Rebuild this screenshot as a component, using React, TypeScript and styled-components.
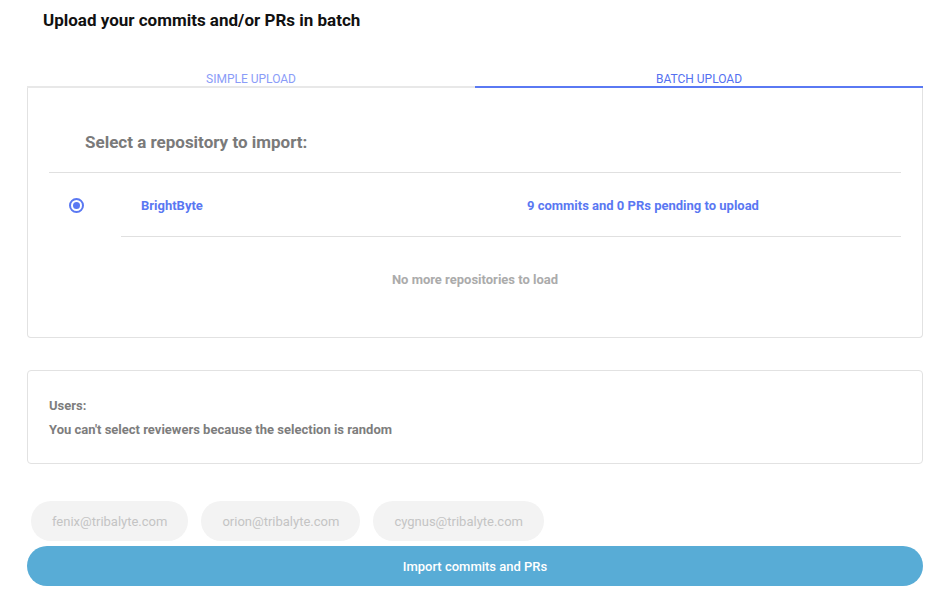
import React from "react";
import styled, { createGlobalStyle } from "styled-components";

const Global = createGlobalStyle`
  html, body { margin: 0; padding: 0; background: #fff; }
  body { font-family: Roboto, "Liberation Sans", Arial, sans-serif; }
  * { box-sizing: border-box; }
`;

const Page = styled.div`
  padding: 0 28px 0 27px;
  display: flex;
  flex-direction: column;
`;

const Title = styled.h1`
  margin: 0 0 0 16px;
  padding-top: 10px;
  font-size: 17px;
  line-height: 20px;
  font-weight: 700;
  color: #111;
`;

const Tabs = styled.div`
  margin-top: 32px;
  display: grid;
  grid-template-columns: 1fr 1fr;
`;

const Tab = styled.div<{ $active?: boolean }>`
  padding-top: 10px;
  line-height: 14px;
  font-size: 12px;
  font-weight: 400;
  text-align: center;
  text-transform: uppercase;
  color: ${(p) => (p.$active ? "#5470f0" : "#8a9cf8")};
  border-bottom: 2px solid ${(p) => (p.$active ? "#5a79f3" : "#e8e8e8")};
`;

const Card = styled.div`
  border: 1px solid #e2e2e2;
  border-top: none;
  border-radius: 0 0 4px 4px;
  padding: 44px 21px 49px;
`;

const Heading = styled.h2`
  margin: 0 0 20px 36px;
  font-size: 17px;
  line-height: 20px;
  font-weight: 700;
  color: #7a7a7a;
`;

const List = styled.div`
  border-top: 1px solid #e0e0e0;
`;

const Row = styled.div`
  display: flex;
  height: 64px;
`;

const RadioCell = styled.div`
  width: 72px;
  padding-left: 20px;
  padding-top: 1px;
  display: flex;
  align-items: center;
`;

const Radio = styled.span`
  width: 15px;
  height: 15px;
  border-radius: 50%;
  border: 2px solid #5a78f2;
  display: flex;
  align-items: center;
  justify-content: center;
  &::after {
    content: "";
    width: 7px;
    height: 7px;
    border-radius: 50%;
    background: #5a78f2;
  }
`;

const RowBody = styled.div`
  flex: 1;
  display: grid;
  grid-template-columns: 386px 1fr;
  align-items: center;
  padding: 2px 0 0 20px;
  border-bottom: 1px solid #e0e0e0;
`;

const RepoText = styled.span`
  font-size: 13px;
  font-weight: 700;
  color: #5a78f2;
`;

const Empty = styled.div`
  margin-top: 35px;
  text-align: center;
  font-size: 13px;
  line-height: 16px;
  font-weight: 700;
  color: #ababab;
`;

const UsersCard = styled.div`
  margin-top: 32px;
  border: 1px solid #e2e2e2;
  border-radius: 4px;
  padding: 27px 21px 25px;
  display: flex;
  flex-direction: column;
  gap: 8px;
`;

const Note = styled.div`
  font-size: 13px;
  line-height: 16px;
  font-weight: 700;
  color: #7d7d7d;
`;

const Chips = styled.div`
  margin: 37px 0 0 4px;
  display: flex;
  gap: 13px;
`;

const Chip = styled.span`
  height: 40px;
  padding: 0 21px;
  border-radius: 20px;
  background: #f3f3f3;
  color: #c4c4c4;
  font-size: 13px;
  display: flex;
  align-items: center;
`;

const Button = styled.button`
  margin-top: 5px;
  height: 40px;
  border: none;
  border-radius: 20px;
  background: #58acd6;
  color: #fff;
  font-family: inherit;
  font-size: 13px;
  font-weight: 500;
  cursor: pointer;
`;

const users = ["fenix@tribalyte.com", "orion@tribalyte.com", "cygnus@tribalyte.com"];

export default function App() {
  return (
    <>
      <Global />
      <Page>
        <Title>Upload your commits and/or PRs in batch</Title>
        <Tabs>
          <Tab>Simple upload</Tab>
          <Tab $active>Batch upload</Tab>
        </Tabs>
        <Card>
          <Heading>Select a repository to import:</Heading>
          <List>
            <Row>
              <RadioCell>
                <Radio />
              </RadioCell>
              <RowBody>
                <RepoText>BrightByte</RepoText>
                <RepoText>9 commits and 0 PRs pending to upload</RepoText>
              </RowBody>
            </Row>
          </List>
          <Empty>No more repositories to load</Empty>
        </Card>
        <UsersCard>
          <Note>Users:</Note>
          <Note>You can't select reviewers because the selection is random</Note>
        </UsersCard>
        <Chips>
          {users.map((u) => (
            <Chip key={u}>{u}</Chip>
          ))}
        </Chips>
        <Button>Import commits and PRs</Button>
      </Page>
    </>
  );
}
